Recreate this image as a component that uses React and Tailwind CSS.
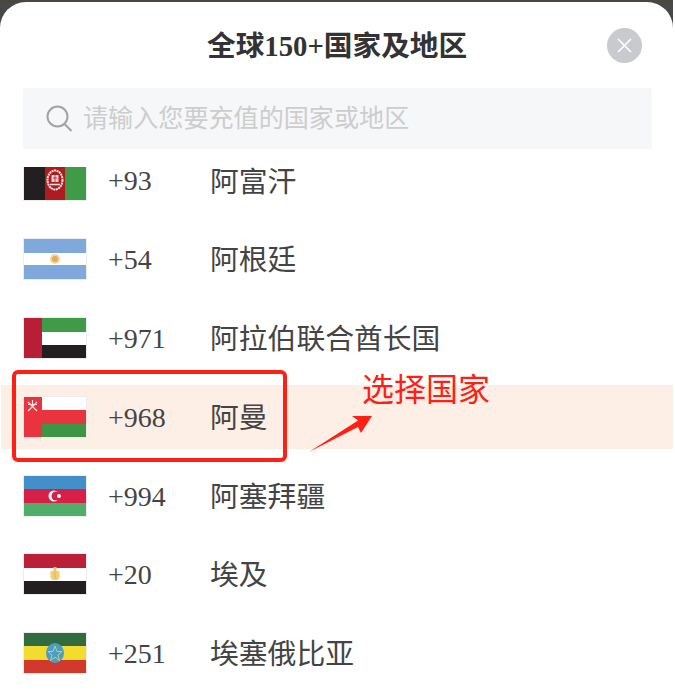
const FONT = "font-['Liberation_Serif','Noto_Sans_CJK_SC',sans-serif]";

const Frame = ({ children }) => (
  <svg width="64" height="42" viewBox="0 0 64 42" className="shrink-0 block">
    <rect x="0.5" y="0.5" width="63" height="41" fill="#fff" stroke="#ececec" />
    {children}
  </svg>
);

const Afghanistan = () => (
  <Frame>
    <rect x="1" y="1" width="21" height="40" fill="#231f20" />
    <rect x="22" y="1" width="20" height="40" fill="#ae1c20" />
    <rect x="42" y="1" width="21" height="40" fill="#3f9b48" />
    <ellipse cx="32" cy="21" rx="7.500" ry="9.500" fill="none" stroke="#f5e4e4" strokeWidth="2" strokeDasharray="2 0.6" />
    <rect x="28.500" y="16" width="7" height="7" fill="#f0d4d4" />
    <path d="M30 19h4M32 16v7" stroke="#ae1c20" strokeWidth="0.8" />
    <path d="M27 25.500h10" stroke="#f5e4e4" strokeWidth="1.500" />
  </Frame>
);

const Argentina = () => (
  <Frame>
    <rect x="1" y="1" width="62" height="14" fill="#7fa9dc" />
    <rect x="1" y="27" width="62" height="14" fill="#7fa9dc" />
    <circle cx="32" cy="21" r="5" fill="#f0d7a0" />
    <circle cx="32" cy="21" r="3" fill="#e3ab55" />
  </Frame>
);

const Uae = () => (
  <Frame>
    <rect x="1" y="1" width="62" height="14" fill="#3f9b48" />
    <rect x="1" y="28" width="62" height="13" fill="#231f20" />
    <rect x="1" y="1" width="18" height="40" fill="#b81f37" />
  </Frame>
);

const Oman = () => (
  <Frame>
    <rect x="1" y="14" width="62" height="14" fill="#e9343f" />
    <rect x="1" y="28" width="62" height="13" fill="#3f9546" />
    <rect x="1" y="1" width="18" height="40" fill="#e9343f" />
    <path d="M5 6l9 9M14 6l-9 9M9.500 4v6M5 8.500h9" stroke="#fbe3e3" strokeWidth="1.200" />
  </Frame>
);

const Azerbaijan = () => (
  <Frame>
    <rect x="1" y="1" width="62" height="13" fill="#4390c8" />
    <rect x="1" y="14" width="62" height="14" fill="#d81f48" />
    <rect x="1" y="28" width="62" height="13" fill="#4fae69" />
    <circle cx="31" cy="21" r="5.500" fill="#fff" />
    <circle cx="33" cy="21" r="4.500" fill="#d81f48" />
    <circle cx="36" cy="21" r="2" fill="#fff" />
  </Frame>
);

const Egypt = () => (
  <Frame>
    <rect x="1" y="1" width="62" height="14" fill="#bc2038" />
    <rect x="1" y="28" width="62" height="13" fill="#231f20" />
    <path d="M27.500 18h9v7l-2 2h-5l-2-2z" fill="#f0cf7c" />
    <rect x="30.500" y="14" width="3" height="5" fill="#efc760" />
    <path d="M32 19v7" stroke="#e2b24c" strokeWidth="1" />
  </Frame>
);

const Ethiopia = () => (
  <Frame>
    <rect x="1" y="1" width="62" height="14" fill="#306b42" />
    <rect x="1" y="14" width="62" height="14" fill="#f2dc2e" />
    <rect x="1" y="28" width="62" height="13" fill="#d1392c" />
    <ellipse cx="32" cy="21" rx="9" ry="10" fill="#4a9ccd" />
    <path d="M32 14l2 5.500h5l-4 3.500 1.500 5.500-4.500-3.300-4.500 3.300 1.500-5.500-4-3.500h5z" fill="none" stroke="#c8cf6a" strokeWidth="1" />
  </Frame>
);

const countries = [
  { Flag: Afghanistan, code: "+93", name: "阿富汗" },
  { Flag: Argentina, code: "+54", name: "阿根廷" },
  { Flag: Uae, code: "+971", name: "阿拉伯联合酋长国" },
  { Flag: Oman, code: "+968", name: "阿曼", active: true },
  { Flag: Azerbaijan, code: "+994", name: "阿塞拜疆" },
  { Flag: Egypt, code: "+20", name: "埃及" },
  { Flag: Ethiopia, code: "+251", name: "埃塞俄比亚" },
];

export default function App() {
  return (
    <div className={`relative h-[696px] w-[673px] overflow-hidden bg-[#484848] ${FONT}`}>
      <div className="h-[2px] bg-[#4b473b]" />
      <div className="flex h-[694px] flex-col overflow-hidden rounded-t-[26px] bg-white">
        <div className="flex h-[86px] items-center pl-[207px] pr-[31px] pt-[2px]">
          <h1 className="flex-1 text-[28.700px] font-bold leading-none text-[#333]">全球150+国家及地区</h1>
          <button className="-mt-[2px] flex h-[35px] w-[35px] items-center justify-center rounded-full bg-[#c9cacd]">
            <svg width="17" height="17" viewBox="0 0 17 17" fill="none" stroke="#fff" strokeWidth="1.600">
              <path d="M2 2l13 13M15 2L2 15" />
            </svg>
          </button>
        </div>

        <div className="mx-[23px] flex h-[61px] w-[629px] shrink-0 items-center gap-[10px] rounded-[3px] bg-[#f6f7f9] pl-[23px]">
          <svg width="27" height="27" viewBox="0 0 27 27" fill="none" stroke="#a3a3a3" strokeWidth="2" className="shrink-0">
            <circle cx="11.500" cy="11.500" r="10" />
            <path d="M18.500 19l7 7" />
          </svg>
          <span className="text-[25.100px] leading-none text-[#cdcdcd]">请输入您要充值的国家或地区</span>
        </div>

        <div className="mt-[18px] flex-1 overflow-hidden">
          <ul className="-mt-[18.600px] flex flex-col gap-[14.800px]">
            {countries.map(({ Flag, code, name, active }) => (
              <li
                key={code}
                className={`ml-px flex h-[64px] items-center pl-[22px] ${active ? "bg-[#fdefe5]" : ""}`}
              >
                <Flag />
                <span className="ml-[21px] w-[103px] pt-[2px] text-[28px] leading-none text-[#444]">{code}</span>
                <span className="-ml-px pt-[3px] text-[28.800px] leading-none text-[#444]">{name}</span>
              </li>
            ))}
          </ul>
        </div>
      </div>

      {/* annotation drawn on top of the screenshot */}
      <div className="absolute left-[12px] top-[370px] h-[92px] w-[275px] rounded-[6px] border-[4px] border-[#ff2015]" />
      <span className="absolute left-[362px] top-[374px] text-[32px] leading-none text-[#ff2015]">选择国家</span>
      <svg width="70" height="45" viewBox="0 0 70 45" className="absolute left-[308px] top-[412px]">
        <path d="M1 40L50 8.500L44 4H64L53 21L50 15z" fill="#ff2015" />
      </svg>
    </div>
  );
}
